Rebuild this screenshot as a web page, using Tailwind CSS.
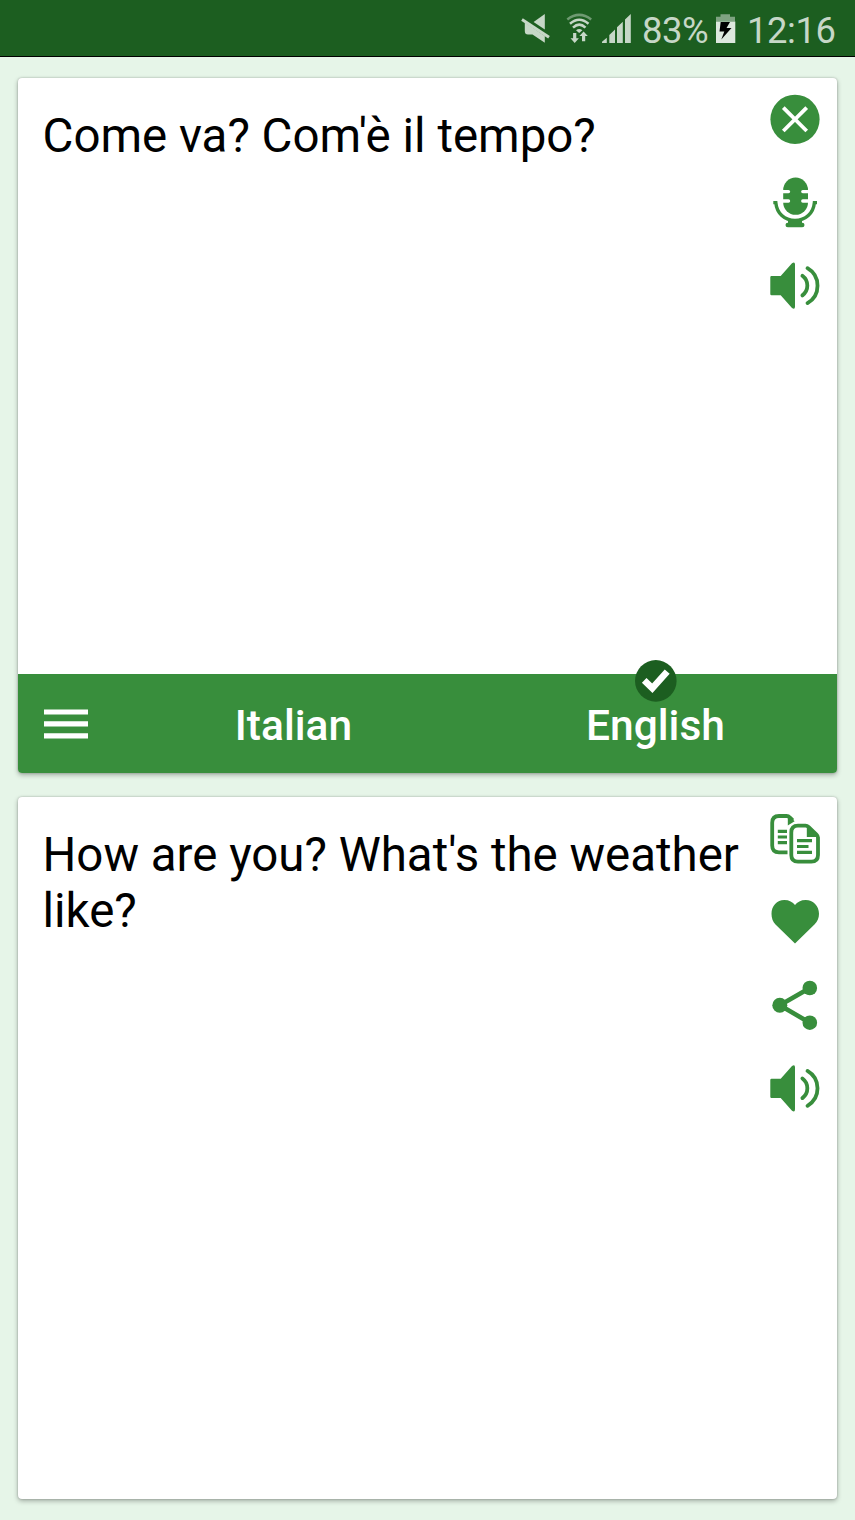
<!DOCTYPE html>
<html lang="en">
<head>
<meta charset="utf-8">
<title>Translator</title>
<script src="https://cdn.jsdelivr.net/npm/@tailwindcss/browser@4"></script>
</head>
<body class="flex h-[1520px] w-[855px] flex-col overflow-hidden bg-[#e6f5e8] font-['Roboto',sans-serif]">

<header class="flex h-[57px] shrink-0 items-center border-b border-black bg-[#1c5e20] pl-[516px] text-[36.4px] leading-none tracking-[-0.4px] text-[#c6d7c7]">
  <svg class="h-[56px] w-[122px] shrink-0" viewBox="516 0 122 56" fill="#c6d7c7">
    <path d="M544.8 14V29.6L533.6 22Z"/>
    <path d="M524.8 22.5L544.8 36V42.7L532.5 34.5H528Q524.8 34.5 524.8 31Z"/>
    <path d="M522 19.4L549 37.2" stroke="#c6d7c7" stroke-width="3" fill="none"/>
    <g fill="none" stroke="#c6d7c7" stroke-width="2.5">
      <path d="M567.3 19.4Q579.2 10.4 591.2 19.4" stroke="#6f9a72"/>
      <path d="M570 23.8Q579.2 15.6 588.5 23.8"/>
      <path d="M573 27.6Q579.2 21.6 585.5 27.6"/>
    </g>
    <path d="M576 30.2Q579.2 27.6 582.4 30.2L579.2 33Z"/>
    <path d="M573.1 33h3.2v5.2h2.6L574.7 43l-4.2-4.8h2.6zM582 41.3h3.2v-5.2h2.6L583.6 31.4l-4.2 4.7h2.6z"/>
    <path d="M602 42.9V41.8L606.8 37.8V42.9ZM609.3 42.9V35L615 29.4V42.9ZM617 42.9V27.3L622.8 21.8V42.9ZM625 42.9V19.6L630.8 14V42.9Z"/>
  </svg>
  <span class="ml-[4px] w-[66px] shrink-0 pt-[6px] whitespace-nowrap">83%</span>
  <svg class="ml-[6px] h-[56px] w-[24px] shrink-0" viewBox="714 0 24 56">
    <path d="M716 21.5V16.8H720.5V14.3H730V16.8H735V21.5Z" fill="#7fa382"/>
    <path d="M716 21.5H735.3V43H716Z" fill="#dde8de"/>
    <path d="M720.7 22H730L726.5 28H731.5L721.3 39.6L724.3 31.5H719.5Z" fill="#000"/>
  </svg>
  <span class="ml-[9px] pt-[6px] whitespace-nowrap">12:16</span>
</header>

<main class="flex flex-1 flex-col gap-[24px] pt-[21px] pr-[18.5px] pl-[18px]">
  <section class="flex h-[695px] flex-col rounded-[4px] bg-white shadow-[0_2px_5px_rgba(0,0,0,0.3),0_0_2px_rgba(0,0,0,0.25)]">
    <div class="flex h-[596px] justify-between">
      <p class="pt-[30px] pl-[24.5px] text-[47.45px] leading-[56px] whitespace-nowrap text-black">Come va? Com'è il tempo?</p>
      <div class="mr-[11.5px] flex w-[60px] shrink-0 flex-col pt-[11px]">
        <svg class="mb-[23px] size-[60px] shrink-0" viewBox="765 89 60 60">
          <circle cx="795" cy="119.3" r="24.6" fill="#388e3c"/>
          <path d="M783.3 107.6L806.7 131M806.7 107.6L783.3 131" stroke="#fff" stroke-width="3.8"/>
        </svg>
        <svg class="mb-[23px] size-[60px] shrink-0" viewBox="765 172 60 60" fill="#388e3c">
          <rect x="783.2" y="177.6" width="24.8" height="37.2" rx="12.4"/>
          <path d="M782 191.6H788.5M802.8 191.6H809M782 201H788.5M802.8 201H809" stroke="#fff" stroke-width="3.4" stroke-linecap="round"/>
          <path d="M773.3 202.6H775.8C776.8 213.4 784.5 220.4 795 220.4S813.4 213.4 814.4 202.6H817" fill="none" stroke="#388e3c" stroke-width="3.4"/>
          <path d="M788 219.5H802V224H788Z"/>
          <rect x="785.5" y="222.7" width="19" height="4.6" rx="2.3"/>
        </svg>
        <svg class="size-[60px] shrink-0" viewBox="765 255 60 60">
          <path d="M770.3 277.2Q770.3 276 771.5 276H780.7L792 263.2Q795 261.2 795 264.5V306.5Q795 310 792 308L780.7 295.2H771.5Q770.3 295.2 770.3 294Z" fill="#388e3c"/>
          <path d="M802.4 275.8A12.2 12.2 0 0 1 802.4 295.4M807.5 268.2A20.2 20.2 0 0 1 807.5 303.1" fill="none" stroke="#388e3c" stroke-width="3.8" stroke-linecap="round"/>
        </svg>
      </div>
    </div>
    <div class="relative flex h-[99px] items-center rounded-b-[4px] bg-[#388e3c] text-[42.5px] font-medium text-white">
      <svg class="ml-[26px] h-[30px] w-[44px] shrink-0" viewBox="44 709 44 30" fill="#fff">
        <path d="M44 709.4h44v5.2H44zM44 721.3h44v5.2H44zM44 733.2h44v5.2H44z"/>
      </svg>
      <span class="ml-[24px] w-[363px] pt-[5px] text-center leading-[50px]">Italian</span>
      <span class="w-[361px] pt-[5px] text-center leading-[50px]">English</span>
      <svg class="absolute top-[-14px] left-[617px] size-[42px]" viewBox="635 660 42 42">
        <circle cx="655.8" cy="680.9" r="20.8" fill="#1c5e20"/>
        <path d="M644.2 680.4L652.3 688.2L667.2 671.6" fill="none" stroke="#fff" stroke-width="6.6"/>
      </svg>
    </div>
  </section>

  <section class="flex h-[702px] justify-between rounded-[4px] bg-white shadow-[0_2px_5px_rgba(0,0,0,0.3),0_0_2px_rgba(0,0,0,0.25)]">
    <p class="pt-[31px] pl-[24.5px] text-[47.45px] leading-[55.6px] whitespace-nowrap text-black">How are you? What's the weather<br>like?</p>
    <div class="mr-[11.5px] flex w-[60px] shrink-0 flex-col pt-[12px]">
      <svg class="mb-[23px] size-[60px] shrink-0" viewBox="765 809 60 60" fill="none" stroke="#388e3c" stroke-width="3.8">
        <path d="M787.5 852.3H779Q772.2 852.3 772.2 845.5V822.8Q772.2 816 779 816H786.5Q788.5 816 790 817.5L792.8 820.3"/>
        <path d="M787.8 815.5V825.5L794.6 821.2L789 815.5Z" fill="#388e3c" stroke="none"/>
        <path d="M777.8 831.3H787M777.8 837H787M777.8 842.7H787" stroke-width="3.2"/>
        <path d="M805.5 825.7H798Q791.3 825.7 791.3 832.4V855Q791.3 861.7 798 861.7H811.3Q818 861.7 818 855V837.5Q818 836 816.5 834.5L808.5 826.8Q807.3 825.7 805.5 825.7Z"/>
        <path d="M806.8 825.5V837H818.5Z" fill="#388e3c" stroke="none"/>
        <path d="M797 840.7H812M797 846.5H808.5M797 852.3H812" stroke-width="3.2"/>
      </svg>
      <svg class="mb-[23px] size-[60px] shrink-0" viewBox="765 892 60 60" fill="#388e3c">
        <path d="M795 943.5L775.5 924.5C772.8 921.7 771.5 918 771.5 913.8C771.5 906 777 900 784.3 900C789.2 900 792.7 902 795 905C797.3 902 800.8 900 805.7 900C813.2 900 819 906 819 913.8C819 918 817.5 921.5 814.7 924.3Z"/>
      </svg>
      <svg class="mb-[23px] size-[60px] shrink-0" viewBox="765 975 60 60" fill="#388e3c">
        <path d="M809.8 988L779.8 1005.3L809.8 1022.7" fill="none" stroke="#388e3c" stroke-width="4.6"/>
        <circle cx="809.8" cy="988" r="7.3"/><circle cx="779.8" cy="1005.3" r="7.5"/><circle cx="809.8" cy="1022.7" r="7.3"/>
      </svg>
      <svg class="size-[60px] shrink-0" viewBox="765 1058 60 60">
        <path d="M770.3 1079.9Q770.3 1078.7 771.5 1078.7H780.7L792 1065.9Q795 1063.9 795 1067.2V1109.2Q795 1112.7 792 1110.7L780.7 1097.9H771.5Q770.3 1097.9 770.3 1096.7Z" fill="#388e3c"/>
        <path d="M802.4 1078.5A12.2 12.2 0 0 1 802.4 1098.1M807.5 1070.9A20.2 20.2 0 0 1 807.5 1105.8" fill="none" stroke="#388e3c" stroke-width="3.8" stroke-linecap="round"/>
      </svg>
    </div>
  </section>
</main>
</body>
</html>
